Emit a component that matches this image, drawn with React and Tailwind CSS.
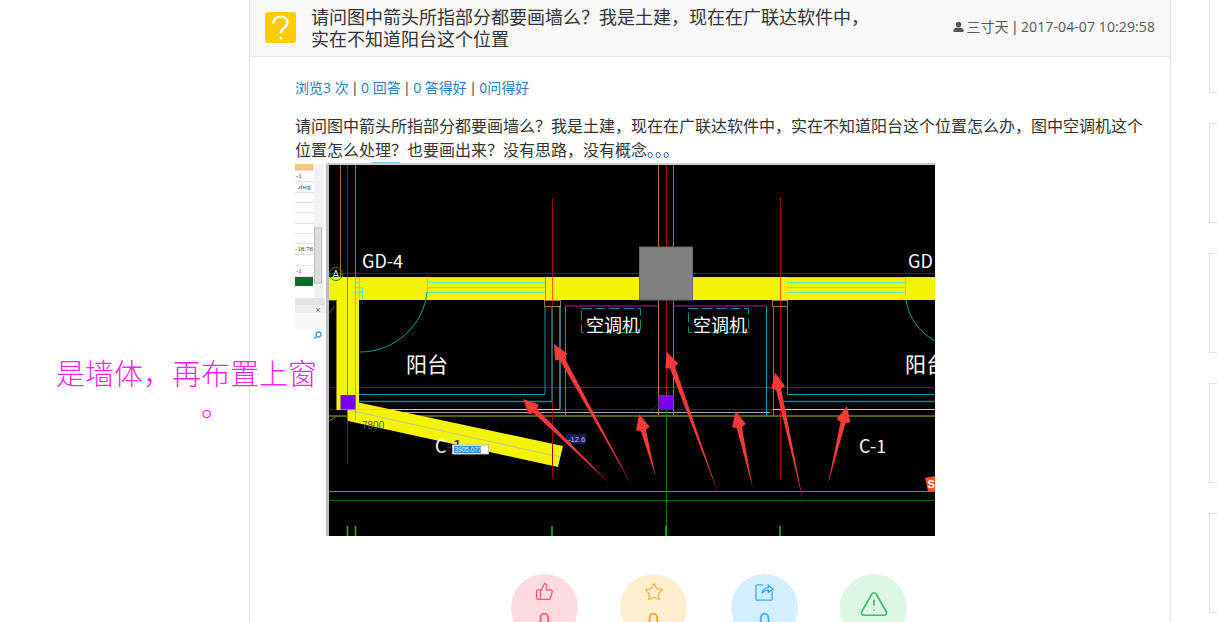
import React from "react";
import { ThumbsUp, Star, TriangleAlert } from "lucide-react";

const arrows = [
  [608, 482, 523, 399],
  [631, 484, 554, 344],
  [655.7, 476.7, 639, 414],
  [718, 492.7, 666.7, 351.7],
  [752.7, 488, 735.7, 411],
  [803, 500.7, 775, 372.7],
  [828, 484, 847, 406],
];

function arrowPoints([tx, ty, hx, hy]) {
  const dx = hx - tx, dy = hy - ty;
  const len = Math.hypot(dx, dy);
  const ux = dx / len, uy = dy / len;
  const nx = -uy, ny = ux;
  const headLen = 17;
  const bx = hx - ux * headLen, by = hy - uy * headLen;
  const nb = hx - ux * (headLen - 2), mb = hy - uy * (headLen - 2);
  const p = (x, y) => `${x.toFixed(1)},${y.toFixed(1)}`;
  return [
    p(tx, ty),
    p(bx + nx * 2.6, by + ny * 2.6),
    p(nb + nx * 7, mb + ny * 7),
    p(hx, hy),
    p(nb - nx * 7, mb - ny * 7),
    p(bx - nx * 2.6, by - ny * 2.6),
  ].join(" ");
}

const panelRows = [170, 181, 192, 202, 212, 223, 233, 243, 254, 265, 276];

function CadDrawing() {
  const cad = '"Noto Sans CJK SC","Open Sans",sans-serif';
  return (
    <svg viewBox="295 162 640 374" width="640" height="374" className="block">
      <rect x="295" y="162" width="640" height="374" fill="#ffffff" />
      {/* left software panel */}
      <rect x="295" y="164" width="18" height="7" fill="#f3c67c" />
      <rect x="313" y="164" width="3" height="7" fill="#e6e6e6" />
      {panelRows.map((y) => (
        <line key={y} x1="295" x2="314" y1={y + 0.5} y2={y + 0.5} stroke="#e2e2e2" />
      ))}
      <rect x="314" y="164" width="9" height="135" fill="#f1f1f1" />
      <rect x="314.5" y="228" width="7" height="55" fill="#dcdcdc" stroke="#bcbcbc" />
      <text x="296" y="178" fontSize="7" fill="#333" fontFamily="Liberation Serif">-1</text>
      <text x="297" y="189" fontSize="7" fill="#333" fontFamily="Liberation Serif">.dwg</text>
      <text x="295" y="251" fontSize="7" fill="#333" fontFamily="Liberation Serif">-18.76</text>
      <text x="296" y="273" fontSize="7" fill="#333" fontFamily="Liberation Serif">-1</text>
      <rect x="295" y="277" width="18" height="9" fill="#0b6b2a" />
      <rect x="295" y="298" width="30" height="7" fill="#e4e4e4" />
      <rect x="295" y="305" width="31" height="8" fill="#efefef" />
      <rect x="295" y="313" width="31" height="16" fill="#f7f7f7" />
      <text x="315" y="312" fontSize="7" fill="#555" fontFamily="Liberation Sans">⨯</text>
      <circle cx="318.5" cy="334.5" r="2.5" fill="none" stroke="#3b9bd8" strokeWidth="1.3" />
      <line x1="316.5" y1="336.5" x2="314.5" y2="338.5" stroke="#3b9bd8" strokeWidth="1.3" />
      <rect x="326" y="164" width="3" height="372" fill="#bcbcbc" />
      <line x1="371" x2="400" y1="162.5" y2="162.5" stroke="#8cc4f0" />
      <rect x="326" y="163" width="609" height="2" fill="#cfcfcf" />

      {/* black canvas */}
      <rect x="329" y="165" width="606" height="371" fill="#000" />

      {/* horizontals */}
      <line x1="329" x2="935" y1="273.5" y2="273.5" stroke="#8a0000" />
      <line x1="330" x2="935" y1="387.5" y2="387.5" stroke="#0b4d00" />
      <line x1="329" x2="935" y1="409.5" y2="409.5" stroke="#7a0000" />
      <line x1="356" x2="770" y1="412.5" y2="412.5" stroke="#a8a8a8" />
      <line x1="329" x2="935" y1="416" y2="416" stroke="#7c7c00" strokeWidth="1.4" />
      <line x1="329" x2="935" y1="491.5" y2="491.5" stroke="#8a8a00" />
      <line x1="329" x2="935" y1="500.5" y2="500.5" stroke="#0a6a00" />

      {/* vertical column lines above the band */}
      <line x1="340.5" x2="340.5" y1="165" y2="277" stroke="#a8703c" />
      <line x1="355.5" x2="355.5" y1="165" y2="277" stroke="#a8703c" />
      <line x1="347.5" x2="347.5" y1="165" y2="277" stroke="#a00000" />
      <line x1="658.5" x2="658.5" y1="165" y2="415" stroke="#a8703c" />
      <line x1="673.5" x2="673.5" y1="165" y2="415" stroke="#a8703c" />
      <line x1="666.5" x2="666.5" y1="165" y2="400" stroke="#a00000" />
      <line x1="666.5" x2="666.5" y1="395" y2="536" stroke="#007a00" />
      <line x1="650" y1="412" x2="682" y2="381" stroke="#0b4d00" />

      {/* yellow walls */}
      <rect x="329" y="277" width="606" height="23" fill="#f4f400" />
      <rect x="337" y="300" width="22" height="110" fill="#f4f400" />
      <polygon points="355,401.7 563,446 558,467 347,420.7 347,405" fill="#f4f400" />
      <path d="M329 421 L337 416" stroke="#7c7c00" fill="none" />
      <path d="M329 313 L335 306 M337 300.5 H329" stroke="#5c5c00" fill="none" />
      <path d="M336.5 301 V410" stroke="#8a8a00" fill="none" />
      <line x1="348" y1="410" x2="560" y2="457" stroke="#c4c48a" />

      {/* red verticals over band */}
      <line x1="347.5" x2="347.5" y1="277" y2="420" stroke="#ff5a00" />
      <line x1="347.5" x2="347.5" y1="420" y2="464" stroke="#a00000" />
      <line x1="552.5" x2="552.5" y1="198" y2="478" stroke="#a00000" />
      <line x1="552.5" x2="552.5" y1="277" y2="300" stroke="#ff5a00" />
      <line x1="780.5" x2="780.5" y1="198" y2="478" stroke="#a00000" />
      <line x1="780.5" x2="780.5" y1="277" y2="300" stroke="#ff5a00" />
      <line x1="355.5" x2="355.5" y1="277" y2="420" stroke="#b8b84a" />

      {/* stair lines */}
      <g stroke="#5fe8c8" fill="none">
        <path d="M427 277.5 H545 M427 282.5 H545 M427 287.5 H545 M427 292.5 H545" />
        <path d="M427.5 277 V292" />
        <path d="M356 277.5 H360 M356 282.5 H360 M356 287.5 H362 M356 292.5 H362 M359.5 277 V300 M362.5 287 V300" />
        <path d="M787 277.5 H905 M787 282.5 H905 M787 287.5 H905 M787 292.5 H905" />
        <path d="M905.5 277 V296" />
      </g>
      <path d="M427 292 C424 325 395 352 360 352" fill="none" stroke="#00a0a0" />
      <path d="M906 300 C909 320 921 333 935 341" fill="none" stroke="#00a0a0" />
      <line x1="545.5" x2="545.5" y1="277" y2="300" stroke="#9a9a30" />

      {/* brown caps */}
      <rect x="544.5" y="300.5" width="16" height="6" fill="none" stroke="#a8703c" />
      <rect x="772.5" y="300.5" width="15" height="6" fill="none" stroke="#a8703c" />

      {/* rooms */}
      <g fill="none" stroke="#00a0a0">
        <path d="M359 394.5 H545 V306" />
        <path d="M359 401.5 H552 V306" strokeWidth="1.4" stroke="#008a8a" />
        <path d="M565.5 416 V306" />
        <path d="M766.5 416 V306" />
        <path d="M773.5 416 V306" />
        <path d="M780.5 401.5 H935" strokeWidth="1.4" stroke="#008a8a" />
        <path d="M787.5 306 V394.5 H935" />
      </g>
      <path d="M359 409.5 H560 V306" fill="none" stroke="#7fe8e8" />
      <path d="M773 409.5 H935" fill="none" stroke="#7fe8e8" />
      <line x1="565" x2="658" y1="306" y2="306" stroke="#800080" strokeWidth="1.4" />
      <line x1="674" x2="766" y1="306" y2="306" stroke="#800080" strokeWidth="1.4" />
      <g fill="none" stroke="#008a8a" strokeDasharray="10 4">
        <rect x="581.5" y="308.5" width="59" height="24" />
        <rect x="688.5" y="308.5" width="60" height="24" />
      </g>

      {/* gray column + purple pillars */}
      <rect x="639.5" y="247" width="53" height="53" fill="#808080" stroke="#6a6a6a" />
      <rect x="340.5" y="395" width="15" height="14.5" fill="#7a00f0" />
      <rect x="658.5" y="395" width="15" height="14.5" fill="#7a00f0" />

      {/* green ticks */}
      <g stroke="#00d000" strokeWidth="1.5">
        <line x1="347.5" x2="347.5" y1="526" y2="536" />
        <line x1="355.5" x2="355.5" y1="526" y2="536" />
        <line x1="552" x2="552" y1="526" y2="536" />
        <line x1="666" x2="666" y1="526" y2="536" />
        <line x1="780" x2="780" y1="526" y2="536" />
      </g>

      {/* axis marker */}
      <circle cx="336" cy="274" r="6.5" fill="none" stroke="#0a8a00" />
      <text x="332.5" y="278" fontSize="10" fill="#ddd" fontFamily="Liberation Sans">A</text>

      {/* labels */}
      <text x="362" y="268" fontSize="18" fill="#fff" fontFamily={cad}>GD-4</text>
      <text x="908" y="268" fontSize="18" fill="#fff" fontFamily={cad}>GD</text>
      <text x="586" y="332" fontSize="18" fill="#fff" fontFamily={cad}>空调机</text>
      <text x="693" y="332" fontSize="18" fill="#fff" fontFamily={cad}>空调机</text>
      <text x="406" y="372" fontSize="21" fill="#fff" fontFamily={cad}>阳台</text>
      <text x="905" y="372" fontSize="21" fill="#fff" fontFamily={cad}>阳台</text>
      <text x="435" y="453" fontSize="18" fontFamily={cad}>
        <tspan fill="#fff">C</tspan>
        <tspan fill="#2020e0">-1</tspan>
      </text>
      <text x="859" y="453" fontSize="18" fill="#fff" fontFamily={cad}>C-1</text>
      <text x="362" y="429" fontSize="10" fill="#555" fontFamily="Liberation Sans">7800</text>

      {/* dimension widgets */}
      <rect x="452.5" y="445" width="36" height="9" fill="#fff" stroke="#bbb" />
      <rect x="454" y="446" width="27" height="7" fill="#3a8ee8" />
      <text x="454.5" y="452" fontSize="6.5" fill="#d8ecff" fontFamily="Liberation Sans">3905.077</text>
      <rect x="566" y="434" width="20" height="10" fill="#1c1c5c" />
      <text x="568" y="442" fontSize="7.5" fill="#b8c8f0" fontFamily="Liberation Sans">-12.6</text>

      {/* sohu mark */}
      <polygon points="925,478 935,476 935,491 928,491" fill="#f0561e" />
      <text x="927.5" y="488" fontSize="11" fontWeight="700" fill="#fff" fontFamily="Liberation Sans">S</text>

      {/* arrows */}
      {arrows.map((a, i) => (
        <polygon key={i} points={arrowPoints(a)} fill="#f63a3a" />
      ))}
    </svg>
  );
}

function Circle({ bg, children, className }) {
  return (
    <div className={`w-[67px] h-[67px] rounded-full flex flex-col items-center shrink-0 ${bg} ${className || ""}`}>
      {children}
    </div>
  );
}

const Bar = () => <span className="mx-[0.5px] font-['Liberation_Sans'] text-[#555]"> | </span>;

export default function App() {
  return (
    <div
      className="relative h-[622px] w-[1217px] overflow-hidden bg-white flex text-[#333]"
      style={{ fontFamily: '"Open Sans","Noto Sans CJK SC",sans-serif' }}
    >
      {/* overlay annotation */}
      <div className="absolute left-[56px] top-[358px] z-10 w-[270px] text-[29px] leading-[32px] font-light text-[#ff22f0]">
        <div className="whitespace-nowrap">是墙体，再布置上窗</div>
        <div className="pl-[145px]">。</div>
      </div>

      <main className="ml-[249px] w-[922px] h-[622px] border-x border-[#e4e4e4] shrink-0">
        <header className="h-[57px] bg-[#f8f8f8] border-b border-[#e6e6e6] flex pl-[15px] pr-[15px]">
          <div className="mt-[12px] w-[31px] h-[31px] rounded-[3px] bg-[#ffcc00] flex items-center justify-center shrink-0">
            <svg viewBox="0 0 31 31" width="31" height="31" fill="none" stroke="#fff" strokeWidth="2.4">
              <path d="M8.5 11.5 C8.5 7 11.5 4.8 15.5 4.8 C19.8 4.8 22.5 7.3 22.5 10.8 C22.5 15.5 15.8 15.8 15.8 21.5" />
              <circle cx="15.8" cy="26" r="1.5" fill="#fff" stroke="none" />
            </svg>
          </div>
          <h1 className="ml-[15px] mt-[6px] w-[570px] text-[18px] leading-[22px] font-normal text-[#333] shrink-0">
            请问图中箭头所指部分都要画墙么？我是土建，现在在广联达软件中，实在不知道阳台这个位置
          </h1>
          <div className="ml-auto mt-[17px] flex items-center h-[20px] text-[14px] text-[#555] whitespace-nowrap">
            <svg viewBox="0 0 12 12" width="11" height="12" className="mr-[3px]" fill="#555">
              <circle cx="6" cy="3.2" r="2.9" />
              <path d="M0.5 11.5 V9.6 C0.5 7.6 3 6.6 6 6.6 C9 6.6 11.5 7.6 11.5 9.6 V11.5 Z" />
            </svg>
            <span>
              三寸天<Bar />
              <span className="tracking-[0.1px]">2017-04-07 10:29:58</span>
            </span>
          </div>
        </header>

        <div className="pl-[45px] pr-[22px]">
          <p className="mt-[21px] text-[14px] leading-[20px] text-[#555]">
            <span className="text-[#2a7cc4]">浏览3 次</span>
            <Bar />
            <span className="text-[#2a7cc4]">0 回答</span>
            <Bar />
            <span className="text-[#2a7cc4]">0 答得好</span>
            <Bar />
            <span className="text-[#2a7cc4]">0问得好</span>
          </p>
          <p className="mt-[16px] text-[16px] leading-[24px] text-[#333]">
            请问图中箭头所指部分都要画墙么？我是土建，现在在广联达软件中，实在不知道阳台这个位置怎么办，图中空调机这个位置怎么处理？也要画出来？没有思路，没有概念。。。
          </p>
          <CadDrawing />
        </div>

        <div className="mt-[38px] ml-[261px] flex">
          <Circle bg="bg-[#ffdae0]">
            <ThumbsUp size={19} strokeWidth={1.6} color="#f9566f" className="mt-[8px]" />
            <span className="mt-[7px] text-[20px] leading-[24px] text-[#f9566f]">0</span>
          </Circle>
          <Circle bg="bg-[#ffeecd]" className="ml-[42px]">
            <Star size={20} strokeWidth={1.5} color="#f5b041" className="mt-[8px]" />
            <span className="mt-[6px] text-[20px] leading-[24px] text-[#eea320]">0</span>
          </Circle>
          <Circle bg="bg-[#d3efff]" className="ml-[44px]">
            <svg viewBox="0 0 20 20" width="19" height="19" fill="none" stroke="#3fa9f5" strokeWidth="1.4" className="mt-[9px]">
              <path d="M8.5 2 H2 a1 1 0 0 0 -1 1 V17 a1 1 0 0 0 1 1 H17 a1 1 0 0 0 1 -1 V9" />
              <path d="M7.5 11 C8 7 11 4.8 14 4.8 V2.2 L19 6.4 L14 10 V7.6 C11.5 7.4 9 8.6 7.5 11 Z" />
            </svg>
            <span className="mt-[6px] text-[20px] leading-[24px] text-[#3fa9f5]">0</span>
          </Circle>
          <Circle bg="bg-[#dcf8e2]" className="ml-[42px]">
            <TriangleAlert size={30} strokeWidth={1.3} color="#3cb868" className="mt-[15px]" />
          </Circle>
        </div>
      </main>

      <aside className="ml-[38px] flex-1 flex flex-col gap-[30px]">
        <div className="h-[93px] border-l border-b border-[#e0e0e0] shrink-0" />
        {[0, 1, 2, 3].map((i) => (
          <div key={i} className="h-[100px] border-l border-y border-[#e0e0e0] shrink-0" />
        ))}
      </aside>
    </div>
  );
}
